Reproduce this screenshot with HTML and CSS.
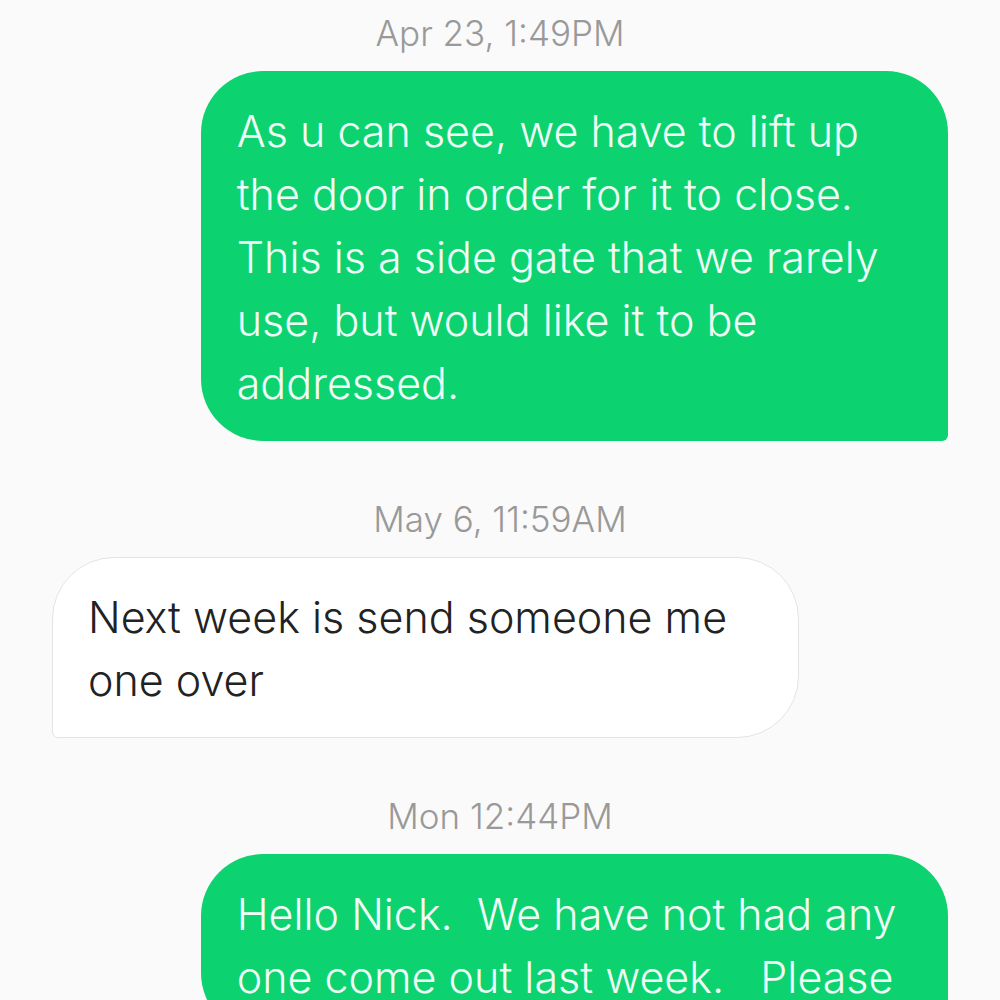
FILE: index.html
```html
<!DOCTYPE html>
<html lang="en">
<head>
    <meta charset="UTF-8">
    <meta name="viewport" content="width=device-width, initial-scale=1.0">
    <title>Messages</title>
    <link rel="stylesheet" href="styles.css">
</head>
<body>
    <main id="chat">
        <time class="stamp">Apr 23, 1:49PM</time>
        <p class="bubble sent">
            As u can see, we have to lift up<br>
            the door in order for it to close.<br>
            This is a side gate that we rarely<br>
            use, but would like it to be<br>
            addressed.
        </p>

        <time class="stamp">May 6, 11:59AM</time>
        <p class="bubble received">
            Next week is send someone me<br>
            one over
        </p>

        <time class="stamp">Mon 12:44PM</time>
        <p class="bubble sent">
            Hello Nick.&nbsp; We have not had any<br>
            one come out last week.&nbsp;&nbsp; Please
        </p>
    </main>
</body>
</html>
```
FILE: styles.css
```css
*{
    margin: 0;
    padding: 0;
    box-sizing: border-box;
}
body{
    height: 100vh;
    overflow: hidden;
    background: #fafafa;
    font-family: Inter, "Liberation Sans", sans-serif;
    font-weight: 300;
}
#chat{
    display: flex;
    flex-direction: column;
    padding: 9px 52px 0;
}
.stamp{
    align-self: center;
    margin-bottom: 14px;
    color: #999;
    font-size: 35px;
    line-height: 48px;
}
.bubble{
    width: 83.4%;
    margin-bottom: 54px;
    padding: 29px 36px 26px;
    font-size: 43px;
    line-height: 63px;
    white-space: nowrap;
}
.sent{
    align-self: flex-end;
    background: #0cd370;
    color: #effdf6;
    border-radius: 62px 62px 6px 62px;
}
.received{
    align-self: flex-start;
    padding: 28px 35px 25px;
    background: #fff;
    color: #222;
    border: 1px solid #e4e4e4;
    border-radius: 62px 62px 62px 6px;
}
```
